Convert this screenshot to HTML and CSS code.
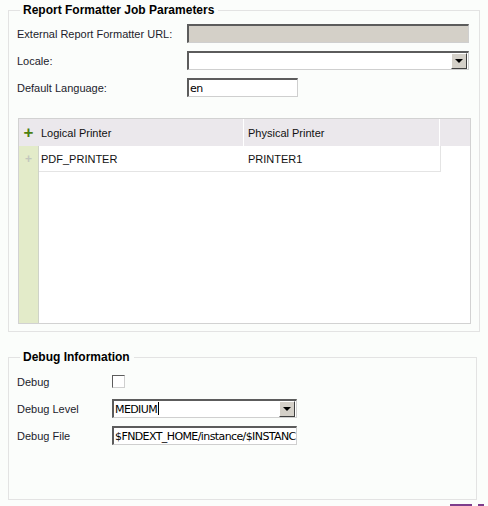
FILE: index.html
```html
<!DOCTYPE html>
<html lang="en">
  <head>
    <meta charset="UTF-8">
    <title>Report Formatter Job Parameters</title>
    <link rel="stylesheet" href="styles.css">
  </head>
  <body>
    <fieldset class="group group-main">
      <legend>Report Formatter Job Parameters</legend>
      <div class="form-row">
        <label>External Report Formatter URL:</label>
        <div class="field field-wide field-disabled"></div>
      </div>
      <div class="form-row">
        <label>Locale:</label>
        <div class="field field-wide select">
          <span class="select-text"></span>
          <span class="drop-btn"><span class="arrow"></span></span>
        </div>
      </div>
      <div class="form-row">
        <label>Default Language:</label>
        <div class="field field-short"><span class="field-text">en</span></div>
      </div>

      <div class="grid">
        <div class="grid-head">
          <div class="gutter"><span class="plus">+</span></div>
          <div class="cell col-logical">Logical Printer</div>
          <div class="cell col-physical">Physical Printer</div>
          <div class="cell col-rest"></div>
        </div>
        <div class="grid-row">
          <div class="gutter"><span class="plus plus-small">+</span></div>
          <div class="cell col-logical">PDF_PRINTER</div>
          <div class="cell col-physical">PRINTER1</div>
        </div>
        <div class="grid-fill">
          <div class="gutter"></div>
        </div>
      </div>
    </fieldset>

    <fieldset class="group group-debug">
      <legend>Debug Information</legend>
      <div class="debug-row debug-check">
        <label>Debug</label>
        <span class="checkbox"></span>
      </div>
      <div class="debug-row">
        <label>Debug Level</label>
        <div class="field field-debug select">
          <span class="field-text">MEDIUM<span class="caret"></span></span>
          <span class="drop-btn"><span class="arrow"></span></span>
        </div>
      </div>
      <div class="debug-row">
        <label>Debug File</label>
        <div class="field field-debug"><span class="field-text">$FNDEXT_HOME/instance/$INSTANCE_NAME/logs</span></div>
      </div>
    </fieldset>

    <div class="page-foot">
      <span class="foot-bar foot-bar-long"></span>
      <span class="foot-bar foot-bar-short"></span>
    </div>
  </body>
</html>
```

FILE: styles.css
```css
body {
  margin: 0;
  background: #fbfdfb;
  font-family: "Liberation Sans", Arial, sans-serif;
  font-size: 11px;
  color: #000;
}

.group {
  border: 1px solid #e3e3e3;
  margin: 3px 8px 0 8px;
  padding: 0;
  min-width: 0;
}

.group legend {
  font-weight: bold;
  font-size: 12px;
  padding: 0 4px 0 3px;
  margin-left: 11px;
  color: #000;
}

.group-main {
  height: 320px;
  padding-top: 7px;
}

.form-row {
  display: flex;
  align-items: center;
  height: 19px;
  margin-bottom: 8px;
  padding-left: 8px;
}

.form-row label {
  width: 170px;
  color: #1c1c2c;
}

.field {
  box-sizing: border-box;
  height: 19px;
  background: #fff;
  border-style: solid;
  border-width: 2px 1px 1px 2px;
  border-color: #5c5c5c #cfcfcf #cfcfcf #5c5c5c;
  display: flex;
  align-items: center;
  overflow: hidden;
  white-space: nowrap;
}

.field-wide {
  width: 282px;
}

.field-short {
  width: 111px;
}

.field-disabled {
  background: #d4d0c8;
}

.field-text {
  flex: 1;
  padding-left: 1px;
  overflow: hidden;
  font-family: "DejaVu Sans", Tahoma, sans-serif;
  font-size: 11px;
  letter-spacing: -0.6px;
}

.select-text {
  flex: 1;
}

.caret {
  display: inline-block;
  width: 1px;
  height: 13px;
  background: #000;
  vertical-align: -2px;
  margin-left: 1px;
}

.drop-btn {
  box-sizing: border-box;
  width: 16px;
  height: 16px;
  margin-right: 1px;
  background: #d4d0c8;
  border: 1px solid;
  border-color: #fff #404040 #404040 #fff;
  display: flex;
  align-items: center;
  justify-content: center;
}

.arrow {
  width: 0;
  height: 0;
  border-left: 4px solid transparent;
  border-right: 4px solid transparent;
  border-top: 4px solid #000;
}

/* printer grid */
.grid {
  margin: 21px 0 0 9px;
  width: 453px;
  height: 206px;
  box-sizing: border-box;
  border: 1px solid #d2d2d2;
  display: flex;
  flex-direction: column;
  background: #fff;
}

.grid .gutter {
  width: 19px;
  flex: none;
  background: #e3ebc9;
  border-right: 1px solid #cfd3c8;
  display: flex;
  align-items: center;
  justify-content: center;
}

.grid-head {
  display: flex;
  height: 27px;
  background: #ebe8ec;
}

.grid-head .gutter {
  background: #ebe8ec;
  border-right: none;
}

.cell {
  box-sizing: border-box;
  display: flex;
  align-items: center;
  padding-left: 3px;
  color: #111;
}

.col-logical {
  width: 206px;
}

.col-physical {
  width: 196px;
}

.grid-head .col-logical,
.grid-head .col-physical {
  border-right: 1px solid #fff;
}

.grid-head .col-physical {
  padding-left: 4px;
}

.col-rest {
  flex: 1;
}

.grid-row {
  display: flex;
  height: 26px;
}

.grid-row .col-logical {
  padding-left: 2px;
  border-bottom: 1px solid #e4e4e4;
}

.grid-row .col-physical {
  border-right: 1px solid #e4e4e4;
  border-bottom: 1px solid #e4e4e4;
}

.grid-fill {
  flex: 1;
  display: flex;
}

.plus {
  color: #4c7f12;
  font-weight: bold;
  font-size: 17px;
  line-height: 1;
}

.plus-small {
  color: #c2c6bd;
  font-size: 12px;
}

/* debug section */
.group-debug {
  margin-top: 18px;
  margin-right: 11px;
  height: 137px;
  padding-top: 11px;
}

.debug-row {
  display: flex;
  align-items: center;
  height: 19px;
  margin-bottom: 8px;
  padding-left: 8px;
}

.debug-check {
  height: 13px;
  margin-bottom: 11px;
}

.debug-row label {
  width: 95px;
  color: #1c1c2c;
}

.checkbox {
  box-sizing: border-box;
  width: 13px;
  height: 13px;
  background: #fff;
  border: 1px solid;
  border-color: #5c5c5c #cfcfcf #cfcfcf #5c5c5c;
}

.field-debug {
  width: 185px;
}

.page-foot {
  display: flex;
  justify-content: flex-end;
  gap: 6px;
  padding-right: 4px;
  margin-top: 4px;
}

.foot-bar {
  height: 2px;
  background: #7d3d8c;
}

.foot-bar-long {
  width: 22px;
}

.foot-bar-short {
  width: 6px;
}
```
